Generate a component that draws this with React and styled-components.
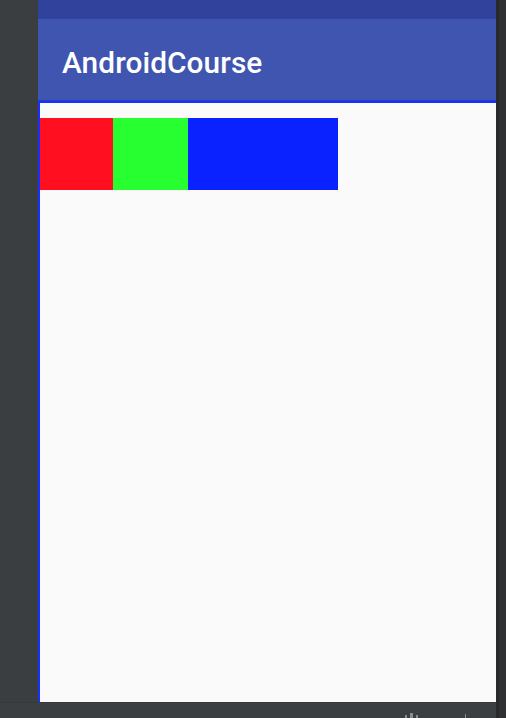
import styled, { createGlobalStyle } from 'styled-components'

const GlobalStyle = createGlobalStyle`
  html, body {
    margin: 0;
    padding: 0;
    background: #3c3f41;
    overflow: hidden;
  }
  #root {
    width: 506px;
    height: 718px;
  }
`

const Screen = styled.div`
  display: flex;
  width: 506px;
  height: 718px;
  background: #3c3f41;
`

const Workspace = styled.div`
  flex: 1 1 auto;
  display: flex;
  flex-direction: column;
`

const PreviewRow = styled.div`
  display: flex;
  height: 702px;
`

const Gutter = styled.div`
  width: 38px;
  background: #3a3e41;
`

const Device = styled.div`
  flex: 1 1 auto;
  display: flex;
  flex-direction: column;
  background: #fafafa;
`

const StatusBar = styled.div`
  height: 19px;
  background: #31429c;
`

const AppBar = styled.header`
  height: 82px;
  display: flex;
  align-items: center;
  padding: 5px 0 0 24px;
  box-sizing: border-box;
  background: #3f55b0;
  color: #fff;
  font-family: Roboto, 'Noto Sans', sans-serif;
  font-weight: 500;
  font-size: 29.8px;
  letter-spacing: 0.1px;
`

const Content = styled.main`
  flex: 1 1 auto;
  border-top: 2px solid #1530ff;
  border-left: 2px solid #1530ff;
  box-shadow: 0 -1px 0 #2838c8;
  padding-top: 15px;
`

const Strip = styled.div`
  display: flex;
`

const Block = styled.div`
  width: ${({ $w }) => $w}px;
  height: 72px;
  background: ${({ $color }) => $color};
`

const BottomBar = styled.div`
  height: 16px;
  position: relative;
  background: #3c3f42;
  border-top: 1px solid #363a3c;
  box-sizing: border-box;
`

const Tick = styled.span`
  position: absolute;
  bottom: 0;
  left: ${({ $x }) => $x}px;
  width: ${({ $w }) => $w}px;
  height: ${({ $h }) => $h}px;
  background: #8a8d8f;
`

const Rail = styled.div`
  width: 10px;
  display: flex;
  background: #2f3133;
  border-left: 3px solid #27292b;
  box-sizing: border-box;
`

export default function App() {
  return (
    <>
      <GlobalStyle />
      <Screen>
        <Workspace>
          <PreviewRow>
            <Gutter />
            <Device>
              <StatusBar />
              <AppBar>AndroidCourse</AppBar>
              <Content>
                <Strip>
                  <Block $w={73} $color="#ff0f1f" />
                  <Block $w={75} $color="#28ff30" />
                  <Block $w={150} $color="#0a22ff" />
                </Strip>
              </Content>
            </Device>
          </PreviewRow>
          <BottomBar>
            <Tick $x={405} $w={2} $h={3} />
            <Tick $x={410} $w={3} $h={5} />
            <Tick $x={416} $w={2} $h={3} />
            <Tick $x={465} $w={1} $h={4} />
          </BottomBar>
        </Workspace>
        <Rail />
      </Screen>
    </>
  )
}
